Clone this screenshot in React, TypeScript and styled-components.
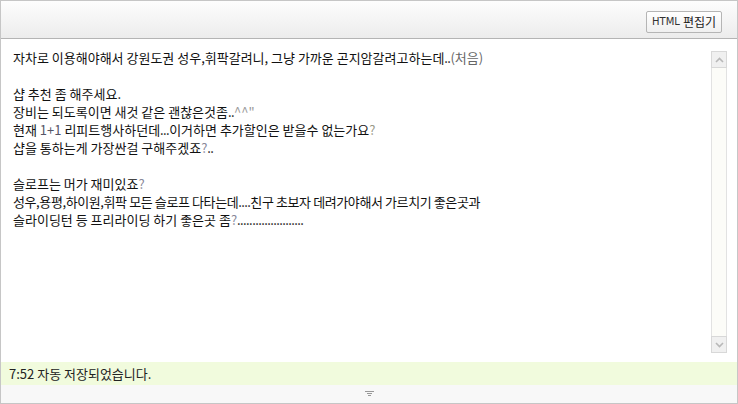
import React from 'react'
import styled, { createGlobalStyle } from 'styled-components'

const GlobalStyle = createGlobalStyle`
  html, body {
    margin: 0;
    padding: 0;
    background: #fff;
  }
  body {
    font-family: 'Noto Sans CJK KR', 'DejaVu Sans', sans-serif;
  }
`

const Editor = styled.div`
  width: 738px;
  height: 404px;
  box-sizing: border-box;
  border: 1px solid #c6c6c6;
  display: flex;
  flex-direction: column;
  background: #fff;
`

const Toolbar = styled.div`
  height: 37px;
  flex-shrink: 0;
  display: flex;
  align-items: center;
  justify-content: flex-end;
  padding-right: 15px;
  background: linear-gradient(#fdfdfd, #ececec);
  border-bottom: 1px solid #b4b4b4;
`

const ModeButton = styled.button`
  height: 22px;
  padding: 0 5px;
  margin-top: 4px;
  border: 1px solid #b5b5b5;
  border-radius: 2px;
  background: linear-gradient(#ffffff, #f0f0f0);
  font-family: 'Noto Sans CJK KR', 'DejaVu Sans', sans-serif;
  font-size: 12px;
  color: #222;
  display: flex;
  align-items: center;
  gap: 3px;
  cursor: pointer;
`

const Small = styled.span`
  font-size: 10px;
  color: #333;
  font-family: 'DejaVu Sans', sans-serif;
`

const Body = styled.div`
  flex: 1;
  display: flex;
  min-height: 0;
`

const Text = styled.div`
  flex: 1;
  padding: 10px 12px;
  font-size: 13px;
  line-height: 18px;
  color: #111;
  white-space: pre;
`

const Line = styled.div<{ tight?: boolean }>`
  height: 18px;
  letter-spacing: ${(p) => (p.tight ? '-0.4px' : '0')};
`

const Faint = styled.span<{ tone?: string }>`
  color: ${(p) => p.tone || '#666'};
`

const Dots = styled.span`
  letter-spacing: -0.6px;
`

const Scrollbar = styled.div`
  width: 16px;
  margin: 12px 10px 9px 0;
  box-sizing: border-box;
  border: 1px solid #e2e2e2;
  background: #fcfcf8;
  display: flex;
  flex-direction: column;
  justify-content: space-between;
`

const ScrollButton = styled.div`
  height: 15px;
  background: #f0f0f0;
  border: 1px solid #d8d8d8;
  margin: -1px;
  display: flex;
  align-items: center;
  justify-content: center;
`

const Status = styled.div`
  height: 23px;
  flex-shrink: 0;
  display: flex;
  align-items: center;
  padding-left: 8px;
  background: #f1fbdd;
  font-size: 13px;
  color: #222;
`

const Resizer = styled.div`
  height: 18px;
  flex-shrink: 0;
  display: flex;
  align-items: center;
  justify-content: center;
  background: #f8f8f8;
`

const Chevron = ({ up }: { up?: boolean }) => (
  <svg width="9" height="6" viewBox="0 0 9 6">
    <path
      d={up ? 'M1 5 L4.5 1.5 L8 5' : 'M1 1 L4.5 4.5 L8 1'}
      stroke="#b8b8b8"
      strokeWidth="1.6"
      fill="none"
    />
  </svg>
)

const Grip = () => (
  <svg width="9" height="6" viewBox="0 0 9 6">
    <rect x="0" y="0" width="9" height="1" fill="#999" />
    <rect x="2" y="2" width="5" height="1" fill="#999" />
    <rect x="3" y="4" width="3" height="1" fill="#999" />
  </svg>
)

export default function App() {
  return (
    <>
      <GlobalStyle />
      <Editor>
        <Toolbar>
          <ModeButton>
            <Small>HTML</Small>편집기
          </ModeButton>
        </Toolbar>
        <Body>
          <Text>
            <Line>
              자차로 이용해야해서 강원도권 성우,휘팍갈려니, 그냥 가까운 곤지암갈려고하는데<Dots>..</Dots>
              <Faint>(처음)</Faint>
            </Line>
            <Line />
            <Line>샵 추천 좀 해주세요.</Line>
            <Line>
              장비는 되도록이면 새것 같은 괜찮은것좀<Dots>..</Dots>
              <Faint tone="#999">^^"</Faint>
            </Line>
            <Line>
              현재 <Faint tone="#556">1+1</Faint> 리피트행사하던데<Dots>...</Dots>이거하면 추가할인은 받을수 없는가요
              <Faint tone="#998">?</Faint>
            </Line>
            <Line>
              샵을 통하는게 가장싼걸 구해주겠죠<Faint tone="#889">?</Faint>
              <Dots>..</Dots>
            </Line>
            <Line />
            <Line>
              슬로프는 머가 재미있죠<Faint tone="#889">?</Faint>
            </Line>
            <Line tight>
              성우,용평,하이원,휘팍 모든 슬로프 다타는데<Dots>....</Dots>친구 초보자 데려가야해서 가르치기 좋은곳과
            </Line>
            <Line>
              슬라이딩턴 등 프리라이딩 하기 좋은곳 좀<Faint tone="#889">?</Faint>
              <Dots>......................</Dots>
            </Line>
          </Text>
          <Scrollbar>
            <ScrollButton>
              <Chevron up />
            </ScrollButton>
            <ScrollButton>
              <Chevron />
            </ScrollButton>
          </Scrollbar>
        </Body>
        <Status>7:52 자동 저장되었습니다.</Status>
        <Resizer>
          <Grip />
        </Resizer>
      </Editor>
    </>
  )
}
